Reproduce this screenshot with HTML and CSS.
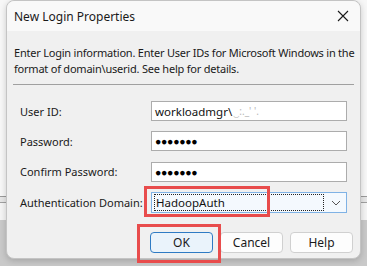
FILE: index.html
```html
<!DOCTYPE html>
<html>
<head>
<meta charset="utf-8">
<link rel="stylesheet" href="styles.css">
</head>
<body>
<div class="desktop">
  <div class="dialog">
    <div class="titlebar">
      <span class="title">New Login Properties</span>
      <svg class="close" width="12" height="12" viewBox="0 0 12 12"><path d="M1 1 L11 11 M11 1 L1 11" stroke="#1a1a1a" stroke-width="1.1" fill="none"/></svg>
    </div>
    <div class="content">
      <p class="desc">Enter Login information. Enter User IDs for Microsoft Windows in the format of domain\userid. See help for details.</p>
      <div class="sep"></div>
      <div class="form">
        <label class="lbl">User ID:</label>
        <div class="field"><span class="val">workloadmgr\</span><span class="redact">‿:._' '.</span></div>
        <label class="lbl">Password:</label>
        <div class="field"><span class="dots">●●●●●●●</span></div>
        <label class="lbl">Confirm Password:</label>
        <div class="field"><span class="dots">●●●●●●●</span></div>
        <label class="lbl">Authentication Domain:</label>
        <div class="combo">
          <div class="focus"><span class="val">HadoopAuth</span></div>
          <svg class="chev" width="10" height="6" viewBox="0 0 10 6"><path d="M1 1 L5 5 L9 1" stroke="#555" stroke-width="1" fill="none"/></svg>
        </div>
      </div>
      <div class="buttons">
        <div class="btn default">OK</div>
        <div class="btn">Cancel</div>
        <div class="btn">Help</div>
      </div>
    </div>
    <div class="mark mark-combo"></div>
    <div class="mark mark-ok"></div>
  </div>
</div>
</body>
</html>
```
FILE: styles.css
```css
html, body {
  margin: 0;
  padding: 0;
}
body {
  width: 367px;
  height: 266px;
  overflow: hidden;
  font-family: "Noto Sans", "Liberation Sans", sans-serif;
  font-size: 11px;
  color: #1a1a1a;
}
.desktop {
  width: 367px;
  height: 266px;
  background:
    linear-gradient(to bottom,
      #f7f7f7 0, #f7f7f7 196px,
      #9a9a9a 196px, #9a9a9a 197px,
      #e6e6e6 197px, #e6e6e6 202px,
      #a0a0a0 202px, #a0a0a0 203px,
      #f4f4f4 203px, #f4f4f4 220px,
      #c9c9c9 220px, #c9c9c9 266px);
  padding: 0 6px;
  box-sizing: border-box;
}
.dialog {
  position: relative;
  width: 355px;
  height: 259px;
  background: #f0f0f0;
  border: 1px solid #c4c4c4;
  border-radius: 8px;
  box-sizing: border-box;
  box-shadow: 0 2px 6px rgba(0,0,0,0.18);
}
.titlebar {
  height: 30px;
  background: #f9f9f9;
  display: flex;
  align-items: center;
  justify-content: space-between;
  padding: 0 9px 0 7px;
  border-radius: 8px 8px 0 0;
}
.title {
  font-size: 12px;
  color: #1a1a1a;
}
.close {
  margin-right: 2px;
}
.content {
  padding: 14px 0 0 0;
}
.desc {
  margin: 0 0 0 7px;
  width: 342px;
  line-height: 16px;
  letter-spacing: -0.22px;
}
.sep {
  margin: 7px 0 0 6px;
  width: 341px;
  height: 1px;
  background: #a0a0a0;
}
.form {
  margin: 16px 0 0 13px;
  display: grid;
  grid-template-columns: 131px 196px;
  row-gap: 10.4px;
  align-items: center;
}
.field {
  height: 20px;
  box-sizing: border-box;
  background: #fff;
  border: 1px solid #acacac;
  display: flex;
  align-items: center;
  padding-left: 3px;
  overflow: hidden;
  white-space: nowrap;
}
.val {
  color: #111;
  font-size: 11.5px;
}
.redact {
  color: #b8b8b8;
  font-size: 10px;
  margin-left: 1px;
}
.dots {
  font-size: 10.5px;
  letter-spacing: -0.3px;
  color: #000;
}
.combo {
  height: 21px;
  box-sizing: border-box;
  background: #f4f9fe;
  border: 1px solid #7fb2e5;
  display: flex;
  align-items: center;
  padding: 0 4px 0 2px;
}
.focus {
  flex: 1;
  height: 15px;
  border: 1px dotted #222;
  display: flex;
  align-items: center;
  padding-left: 1px;
  margin-right: 7px;
}
.chev {
  margin-right: 1px;
}
.buttons {
  margin: 19px 0 0 143px;
  display: flex;
  gap: 7px;
}
.btn {
  width: 63px;
  height: 21px;
  box-sizing: border-box;
  border: 1px solid #d0d0d0;
  border-radius: 4px;
  background: #fdfdfd;
  display: flex;
  align-items: center;
  justify-content: center;
  font-size: 12px;
}
.btn.default {
  border-color: #2f7bc4;
  background: #eaf3fb;
}
.mark {
  position: absolute;
  border: 3px solid #e84c4c;
  box-sizing: border-box;
}
.mark-combo {
  left: 137px;
  top: 185px;
  width: 126px;
  height: 31px;
}
.mark-ok {
  left: 130px;
  top: 223px;
  width: 84px;
  height: 39px;
}
```
